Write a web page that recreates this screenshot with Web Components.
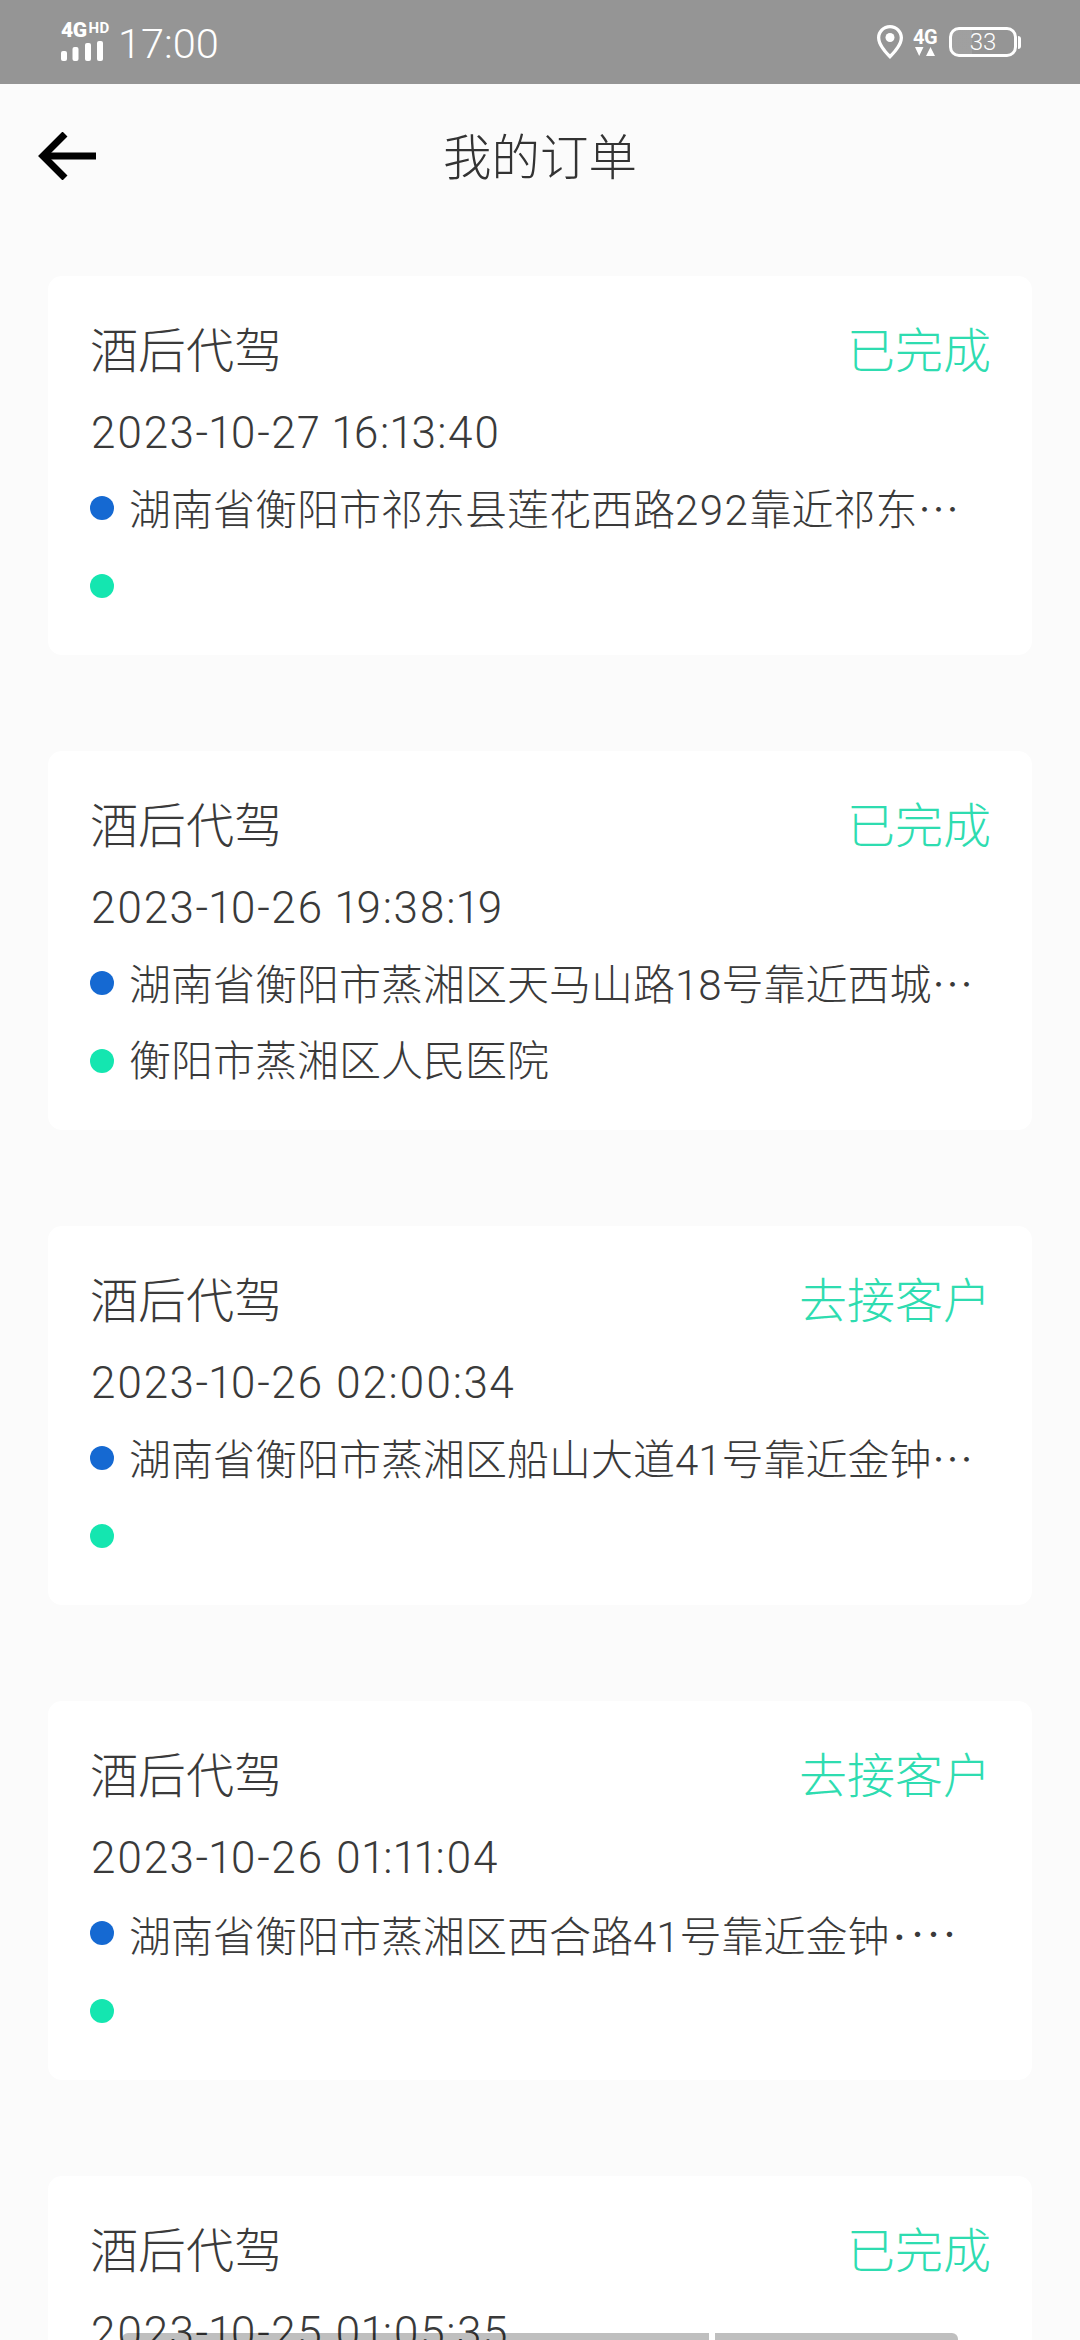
<!DOCTYPE html>
<html lang="zh-CN">
<head>
<meta charset="utf-8">
<title>我的订单</title>
<style>
    html, body { margin: 0; padding: 0; height: 2340px; overflow: hidden; }
    body {
        background: #fbfbfb;
        color: #3a3a3a;
        font-family: Roboto, "Noto Sans CJK SC", sans-serif;
        font-weight: 300;
    }
    /* the centred ellipsis only exists in the CJK font */
    .more { font-family: "Noto Sans CJK SC", sans-serif; }
    .big { font-size: 48px; }
    .mid { margin: 0 4px; font-weight: 500; }
    .wide { letter-spacing: 1.5px; }
    order-list { height: 2256px; overflow: hidden; }
</style>
</head>
<body>
<status-bar></status-bar>
<page-header>我的订单</page-header>
<order-list>
    <order-card>
        <span slot="name">酒后代驾</span>
        <span slot="state">已完成</span>
        <span slot="time">2023-10-27 16:13:40</span>
        <address-row kind="from">湖南省衡阳市祁东县莲花西路<span class="wide">292</span>靠近祁东<span class="more">…</span></address-row>
        <address-row kind="to"></address-row>
    </order-card>
    <order-card>
        <span slot="name">酒后代驾</span>
        <span slot="state">已完成</span>
        <span slot="time">2023-10-26 19:38:19</span>
        <address-row kind="from">湖南省衡阳市蒸湘区天马山路18号靠近西城<span class="more">…</span></address-row>
        <address-row kind="to">衡阳市蒸湘区人民医院</address-row>
    </order-card>
    <order-card>
        <span slot="name">酒后代驾</span>
        <span slot="state">去接客户</span>
        <span slot="time">2023-10-26 02:00:34</span>
        <address-row kind="from">湖南省衡阳市蒸湘区船山大道41号靠近金钟<span class="more">…</span></address-row>
        <address-row kind="to"></address-row>
    </order-card>
    <order-card>
        <span slot="name">酒后代驾</span>
        <span slot="state">去接客户</span>
        <span slot="time">2023-10-26 01:11:04</span>
        <address-row kind="from">湖南省衡阳市蒸湘区西合路41号靠近金钟<span class="mid">·</span><span class="more big">…</span></address-row>
        <address-row kind="to"></address-row>
    </order-card>
    <order-card>
        <span slot="name">酒后代驾</span>
        <span slot="state">已完成</span>
        <span slot="time">2023-10-25 01:05:35</span>
    </order-card>
</order-list>
<home-bars></home-bars>

<script>
class CustomTag extends HTMLElement {
    constructor() {
        super();
        const shadowRoot = this.attachShadow({mode: "open"});
        shadowRoot.innerHTML = `<style>${this.css()}</style>${this.structure()}`;
    }

    css() { return ""; }

    structure() { return ""; }
}

class StatusBar extends CustomTag {
    css() {
        return `
            :host {
                display: flex;
                align-items: center;
                justify-content: space-between;
                height: 84px;
                padding: 0 59px 0 61px;
                background: #959595;
                color: #fff;
                font-family: Roboto, sans-serif;
            }
            .group { display: flex; align-items: center; }
            .signal { width: 46px; margin-right: 11px; margin-top: -2px; }
            .labels { display: flex; align-items: flex-start; height: 17px; font-weight: 700; line-height: 16px; }
            .labels b { font-size: 21px; letter-spacing: -.5px; }
            .labels i { font-size: 15px; font-style: normal; margin: -2px 0 0 2px; letter-spacing: .5px; }
            .bars { display: block; margin-top: 2px; }
            .clock { font-size: 41.500px; font-weight: 300; line-height: 44px; padding-top: 3px; }
            .pin { margin-right: 10px; }
            .net { width: 24px; margin-right: 12px; font-size: 20px; font-weight: 700; line-height: 18px; text-align: center; letter-spacing: -.5px; }
            .net svg { display: block; margin: 1px auto 0; }
            .battery { display: flex; align-items: center; }
            .cell {
                box-sizing: border-box;
                width: 68px;
                height: 30px;
                border: 3px solid #fff;
                border-radius: 10px;
                background: linear-gradient(90deg, rgba(255,255,255,.1) 33%, transparent 33%);
                font-size: 24px;
                font-weight: 300;
                line-height: 24px;
                text-align: center;
            }
            .nub { width: 3px; height: 13px; margin-left: 1px; background: #fff; border-radius: 0 3px 3px 0; }
        `;
    }

    structure() {
        return `
            <div class="group">
                <div class="signal">
                    <div class="labels"><b>4G</b><i>HD</i></div>
                    <svg class="bars" width="42" height="20" viewBox="0 0 42 20" fill="#fff">
                        <rect x="0" y="10" width="6" height="10" rx="2"/>
                        <rect x="11.5" y="6" width="6" height="14" rx="2"/>
                        <rect x="24" y="2" width="6" height="18" rx="2"/>
                        <rect x="36" y="0" width="6" height="20" rx="2"/>
                    </svg>
                </div>
                <div class="clock">17:00</div>
            </div>
            <div class="group">
                <svg class="pin" width="26" height="34" viewBox="0 0 26 34">
                    <path fill="#fff" fill-rule="evenodd" d="M13 0C5.800 0 0 5.700 0 12.800c0 7.400 7.300 15.700 13 21.200 5.700-5.500 13-13.800 13-21.200C26 5.700 20.200 0 13 0zm0 3.300c5.400 0 9.700 4.200 9.700 9.500 0 5.300-5 11.700-9.700 16.500C8.300 24.500 3.300 18.100 3.300 12.800c0-5.300 4.300-9.500 9.700-9.500z"/>
                    <circle cx="13" cy="12.500" r="4.500" fill="#fff"/>
                </svg>
                <div class="net">4G
                    <svg width="20" height="9" viewBox="0 0 20 9" fill="#fff"><path d="M0 0h8.500L4.200 9zM11 9h9L15.500 0z"/></svg>
                </div>
                <div class="battery"><div class="cell">33</div><div class="nub"></div></div>
            </div>
        `;
    }
}

class PageHeader extends CustomTag {
    css() {
        return `
            :host {
                display: flex;
                align-items: center;
                justify-content: center;
                position: relative;
                height: 146px;
                padding-bottom: 7px;
                box-sizing: border-box;
                color: #333;
                font-size: 48.500px;
            }
            svg { position: absolute; left: 38px; top: 48px; }
        `;
    }

    structure() {
        return `
            <svg width="58" height="48" viewBox="0 0 58 48" fill="none" stroke="#000" stroke-width="7">
                <path d="M58 24H4"/>
                <path d="M27 2L5 24 27 46"/>
            </svg>
            <slot></slot>
        `;
    }
}

class OrderList extends CustomTag {
    css() {
        return `
            :host {
                display: flex;
                flex-direction: column;
                gap: 96px;
                padding: 46px 48px 0;
            }
        `;
    }

    structure() {
        return `<slot></slot>`;
    }
}

class OrderCard extends CustomTag {
    css() {
        return `
            :host {
                display: block;
                flex: none;
                padding: 44px 41px 41px 42px;
                background: #fff;
                border-radius: 14px;
            }
            .top {
                display: flex;
                justify-content: space-between;
                height: 60px;
                font-size: 48px;
                line-height: 63px;
            }
            .state { color: #2edcb0; }
            .time {
                height: 54px;
                margin-top: 25px;
                padding-left: 1px;
                font-size: 44px;
                line-height: 56px;
                font-variant-numeric: proportional-nums;
                letter-spacing: 1.500px;
            }
            .rows { display: flex; flex-direction: column; gap: 22px; margin-top: 21px; }
        `;
    }

    structure() {
        return `
            <div class="top">
                <div class="name"><slot name="name"></slot></div>
                <div class="state"><slot name="state"></slot></div>
            </div>
            <div class="time"><slot name="time"></slot></div>
            <div class="rows"><slot></slot></div>
        `;
    }
}

class AddressRow extends CustomTag {
    css() {
        return `
            :host {
                display: flex;
                align-items: center;
                gap: 15px;
                height: 56px;
                font-size: 42px;
                line-height: 56px;
                white-space: nowrap;
            }
            .dot { flex: none; width: 24px; height: 24px; border-radius: 50%; background: #1569d2; }
            .text { padding-top: 2px; }
            :host([kind="to"]) .dot { background: #14e6b0; }
        `;
    }

    structure() {
        return `<span class="dot"></span><span class="text"><slot></slot></span>`;
    }
}

class HomeBars extends CustomTag {
    css() {
        return `
            :host {
                display: flex;
                gap: 6px;
                position: fixed;
                left: 122px;
                bottom: 0;
            }
            div { height: 7px; background: rgba(0, 0, 0, .25); }
            .long { width: 587px; border-top-left-radius: 6px; }
            .short { width: 243px; border-top-right-radius: 6px; }
        `;
    }

    structure() {
        return `<div class="long"></div><div class="short"></div>`;
    }
}

customElements.define("status-bar", StatusBar);
customElements.define("page-header", PageHeader);
customElements.define("order-list", OrderList);
customElements.define("order-card", OrderCard);
customElements.define("address-row", AddressRow);
customElements.define("home-bars", HomeBars);
</script>
</body>
</html>
